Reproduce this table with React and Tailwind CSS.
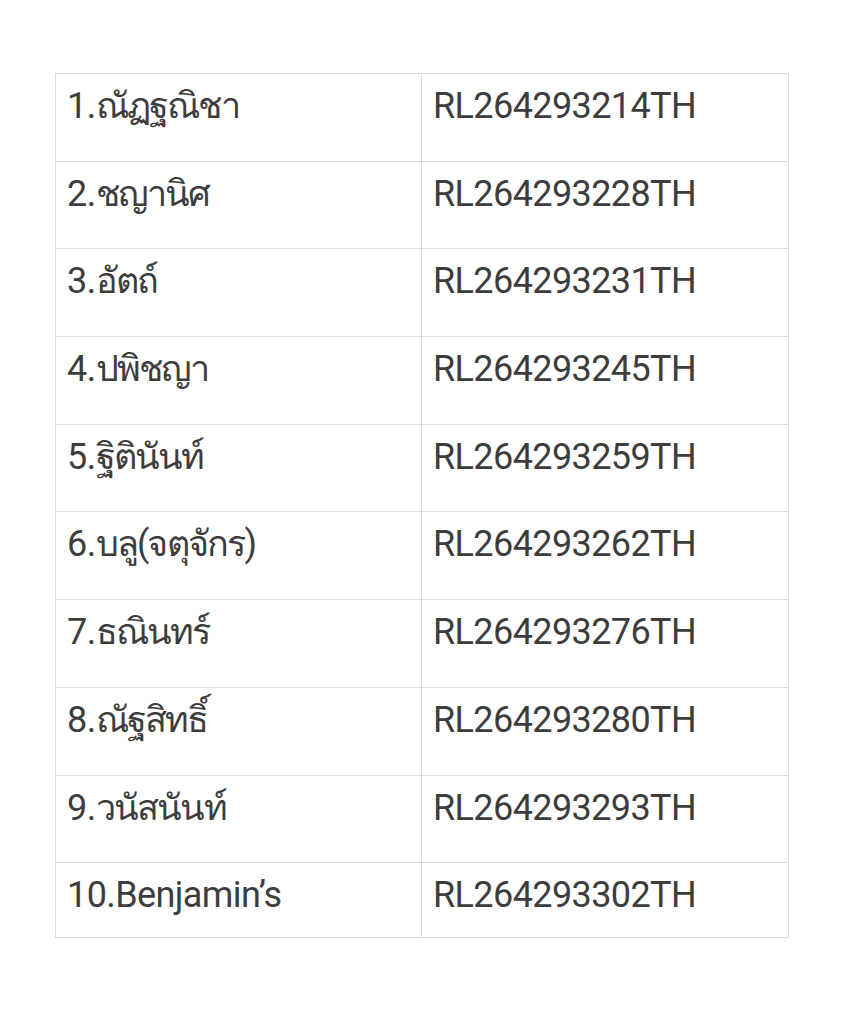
import React from "react";

const rows = [
  { num: "1.", name: "ณัฏฐณิชา", code: "RL264293214TH", thai: true },
  { num: "2.", name: "ชญานิศ", code: "RL264293228TH", thai: true },
  { num: "3.", name: "อัตถ์", code: "RL264293231TH", thai: true },
  { num: "4.", name: "ปพิชญา", code: "RL264293245TH", thai: true },
  { num: "5.", name: "ฐิตินันท์", code: "RL264293259TH", thai: true },
  { num: "6.", name: "บลู(จตุจักร)", code: "RL264293262TH", thai: true },
  { num: "7.", name: "ธณินทร์", code: "RL264293276TH", thai: true },
  { num: "8.", name: "ณัฐสิทธิ์", code: "RL264293280TH", thai: true },
  { num: "9.", name: "วนัสนันท์", code: "RL264293293TH", thai: true },
  { num: "10.", name: "Benjamin’s", code: "RL264293302TH", thai: false },
];

export default function App() {
  return (
    <div
      className="w-[844px] h-[1013px] bg-white pt-[73px] pl-[55px]"
      style={{ fontFamily: "Roboto, 'Noto Sans', 'DejaVu Sans', sans-serif" }}
    >
      <div className="w-[734px] border border-[#dcdcdc] text-[36px] leading-[1.17] tracking-[-0.6px] text-[#3d3d3d]">
        {rows.map((r, i) => (
          <div
            key={r.code}
            className={
              "grid grid-cols-2 " +
              (i === rows.length - 1 ? "h-[74px]" : "h-[87.7px] border-b border-[#dcdcdc]")
            }
          >
            <div className="pl-[11px] pt-[11px] border-r border-[#dcdcdc] whitespace-nowrap">
              {r.num}
              <span className={r.thai ? "tracking-[-1.8px]" : ""}>{r.name}</span>
            </div>
            <div className="pl-[11px] pt-[11px] whitespace-nowrap">{r.code}</div>
          </div>
        ))}
      </div>
    </div>
  );
}
